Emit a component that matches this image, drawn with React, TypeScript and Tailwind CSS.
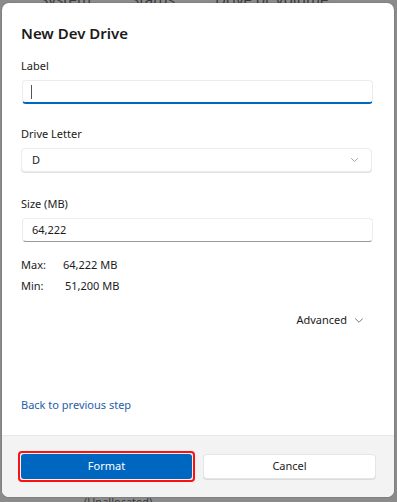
import React from 'react';

const font = { fontFamily: '"Segoe UI", "Noto Sans", "Open Sans", sans-serif' };

function Chevron({ className = '', w = 9, h = 5 }: { className?: string; w?: number; h?: number }) {
    return (
        <svg className={className} width={w} height={h} viewBox="0 0 9 5" fill="none">
            <path d="M0.5 0.5l4 4 4-4" stroke="currentColor" strokeWidth="1" strokeLinecap="round" strokeLinejoin="round" />
        </svg>
    );
}

const FieldLabel = ({ children }: { children: React.ReactNode }) => (
    <div className="text-[11px] leading-[14px] text-[#1b1b1b]">{children}</div>
);

export default function App() {
    return (
        <div className="relative w-[397px] h-[502px] bg-[#8b8b8b] overflow-hidden" style={font}>
            {/* backdrop text, mostly hidden behind the dialog */}
            <div className="absolute top-[-12px] left-[40px] text-[15px] text-[#3a3a3a] flex gap-[40px]">
                <span>System</span>
                <span>Status</span>
                <span>Drive or Volume</span>
            </div>
            <div className="absolute top-[494px] left-[84px] text-[11px] text-[#3a3a3a]">(Unallocated)</div>

            {/* dialog */}
            <div className="relative ml-[2px] mt-[3px] w-[392px] h-[494px] bg-white rounded-[7px] overflow-hidden flex flex-col shadow-[0_0_0_1px_rgba(0,0,0,0.08)]">
                <div className="flex-1 flex flex-col px-[19px] pt-[20px]">
                    <h1 className="text-[15px] leading-[20px] font-semibold text-[#1b1b1b]">New Dev Drive</h1>

                    <div className="mt-[16px]"><FieldLabel>Label</FieldLabel></div>
                    <div className="mt-[7px] ml-[1px] w-[351px] h-[24px] rounded-[4px] bg-white border border-[#ececec] border-b-2 border-b-[#0067c0] flex items-center pl-[8px]">
                        <div className="w-[1px] h-[14px] bg-[#555]" />
                    </div>

                    <div className="mt-[23px]"><FieldLabel>Drive Letter</FieldLabel></div>
                    <div className="mt-[7px] w-[351px] h-[24px] rounded-[4px] bg-white border border-[#ececec] shadow-[0_1px_0_#e2e2e2] flex items-center justify-between pl-[10px] pr-[13px] text-[11px] text-[#1b1b1b]">
                        <span>D</span>
                        <Chevron className="text-[#8a8a8a]" w={7} h={4} />
                    </div>

                    <div className="mt-[25px]"><FieldLabel>Size (MB)</FieldLabel></div>
                    <div className="mt-[7px] ml-[1px] w-[351px] h-[24px] rounded-[4px] bg-white border border-[#ececec] border-b-[#9a9a9a] flex items-center pl-[9px] text-[11px] text-[#1b1b1b]">
                        64,222
                    </div>

                    <div className="mt-[16px] grid grid-cols-[42px_1fr] gap-y-[7px] text-[11px] leading-[14px] text-[#1b1b1b]">
                        <span>Max:</span>
                        <span>64,222 MB</span>
                        <span>Min:</span>
                        <span className="pl-[2px]">51,200 MB</span>
                    </div>

                    <div className="mt-[20px] mr-[12px] flex items-center justify-end gap-[8px] text-[11px] leading-[14px] text-[#1b1b1b]">
                        <span>Advanced</span>
                        <Chevron className="text-[#666]" w={8} h={5} />
                    </div>

                    <div className="mt-[71px] text-[11px] leading-[14px] text-[#1f5ea8]">Back to previous step</div>
                </div>

                <div className="h-[62px] bg-[#f3f3f3] border-t border-[#e8e8e8] flex items-center gap-[8px] pl-[16px] pr-[18px] pb-[1px]">
                    <div className="w-[177px] h-[31px] rounded-[4px] border-2 border-[#ff1010] p-[1px] flex">
                        <button className="flex-1 rounded-[3px] bg-[#0067c0] text-white text-[11px]">Format</button>
                    </div>
                    <button className="flex-1 h-[25px] rounded-[4px] bg-white border border-[#e5e5e5] shadow-[0_1px_0_#dcdcdc] text-[11px] text-[#1b1b1b]">Cancel</button>
                </div>
            </div>
        </div>
    );
}
